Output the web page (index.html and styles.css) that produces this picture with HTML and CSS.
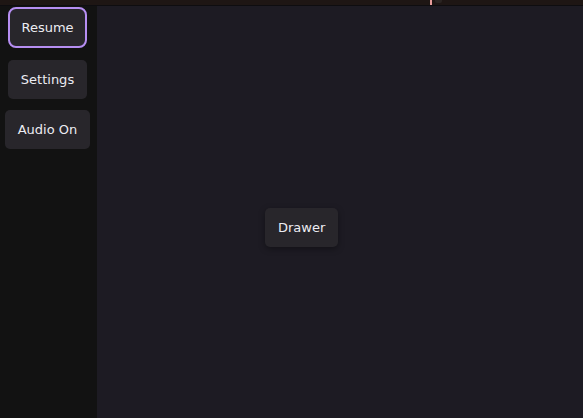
FILE: index.html
```html
<!DOCTYPE html>
<html>
<head>
<meta charset="utf-8">
<link rel="stylesheet" href="styles.css">
</head>
<body>
<div class="topbar"><span class="marker"></span><span class="ghost"></span></div>
<div class="app">
  <nav class="sidebar">
    <button class="btn btn-focus">Resume</button>
    <button class="btn">Settings</button>
    <button class="btn">Audio On</button>
  </nav>
  <main class="stage">
    <button class="btn btn-drawer">Drawer</button>
  </main>
</div>
</body>
</html>
```
FILE: styles.css
```css
* { box-sizing: border-box; }
html, body { margin: 0; padding: 0; height: 100%; }
body {
  background: #1d1b23;
  font-family: "DejaVu Sans", sans-serif;
  font-size: 13px;
  color: #ececf2;
  display: flex;
  flex-direction: column;
  overflow: hidden;
}
.topbar {
  height: 6px;
  flex: none;
  background: #1e1614;
  border-bottom: 1px solid #0e0d10;
  display: flex;
  padding-left: 430px;
  gap: 3px;
}
.marker { width: 2px; height: 5px; background: #e79c9a; }
.ghost { width: 7px; height: 3px; background: #2a2422; border-radius: 0 0 2px 2px; }
.app { flex: 1; display: flex; min-height: 0; }
.sidebar {
  width: 97px;
  flex: none;
  background: #121212;
  display: flex;
  flex-direction: column;
  align-items: center;
  padding: 1px 2px 0 0;
  gap: 11px;
}
.btn {
  font: inherit;
  color: inherit;
  background: #28262b;
  border: 1px solid transparent;
  border-radius: 5px;
  padding: 10px 12px;
  line-height: 17px;
  height: 39px;
  white-space: nowrap;
}
.btn-focus {
  border: 2px solid #b68ef2;
  border-radius: 8px;
  padding: 9px 11px;
  height: 41px;
  margin-bottom: 1px;
}
.stage {
  flex: 1;
  padding: 202px 0 0 168px;
}
.btn-drawer {
  box-shadow: 0 2px 6px rgba(0,0,0,0.35);
}
```
